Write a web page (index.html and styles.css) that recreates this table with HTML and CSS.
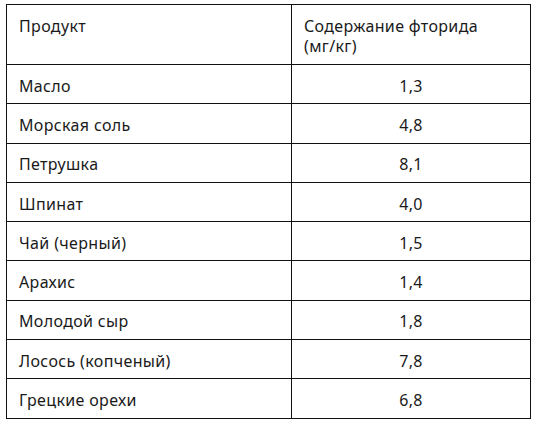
FILE: index.html
```html
<!DOCTYPE html>
<html lang="ru">
<head>
<meta charset="utf-8">
<link rel="stylesheet" href="styles.css">
</head>
<body>
<table class="fluoride">
  <colgroup><col class="c1"><col class="c2"></colgroup>
  <thead>
    <tr><th>Продукт</th><th>Содержание фторида<br>(мг/кг)</th></tr>
  </thead>
  <tbody>
    <tr><td>Масло</td><td class="num">1,3</td></tr>
    <tr><td>Морская соль</td><td class="num">4,8</td></tr>
    <tr><td>Петрушка</td><td class="num">8,1</td></tr>
    <tr><td>Шпинат</td><td class="num">4,0</td></tr>
    <tr><td>Чай (черный)</td><td class="num">1,5</td></tr>
    <tr><td>Арахис</td><td class="num">1,4</td></tr>
    <tr><td>Молодой сыр</td><td class="num">1,8</td></tr>
    <tr><td>Лосось (копченый)</td><td class="num">7,8</td></tr>
    <tr><td>Грецкие орехи</td><td class="num">6,8</td></tr>
  </tbody>
</table>
</body>
</html>
```
FILE: styles.css
```css
html, body { background: #fff; }
body {
  margin: 4px 0 0 6px;
  font-family: "Noto Sans", sans-serif;
  font-size: 16px;
  letter-spacing: 0.35px;
  color: #1a1a1a;
}
.fluoride {
  border-collapse: collapse;
  width: 524px;
  table-layout: fixed;
}
.c1 { width: 285px; }
.c2 { width: 239px; }
.fluoride th, .fluoride td {
  border: 1px solid #111;
  padding: 0 12px;
  line-height: 20px;
  text-align: left;
  font-weight: 400;
}
.fluoride th {
  height: 60px;
  vertical-align: top;
  padding-top: 11px;
  box-sizing: border-box;
}
.fluoride td {
  height: 39.3px;
  box-sizing: border-box;
  vertical-align: middle;
  padding-top: 3px;
}
.fluoride td.num { text-align: center; }
```
